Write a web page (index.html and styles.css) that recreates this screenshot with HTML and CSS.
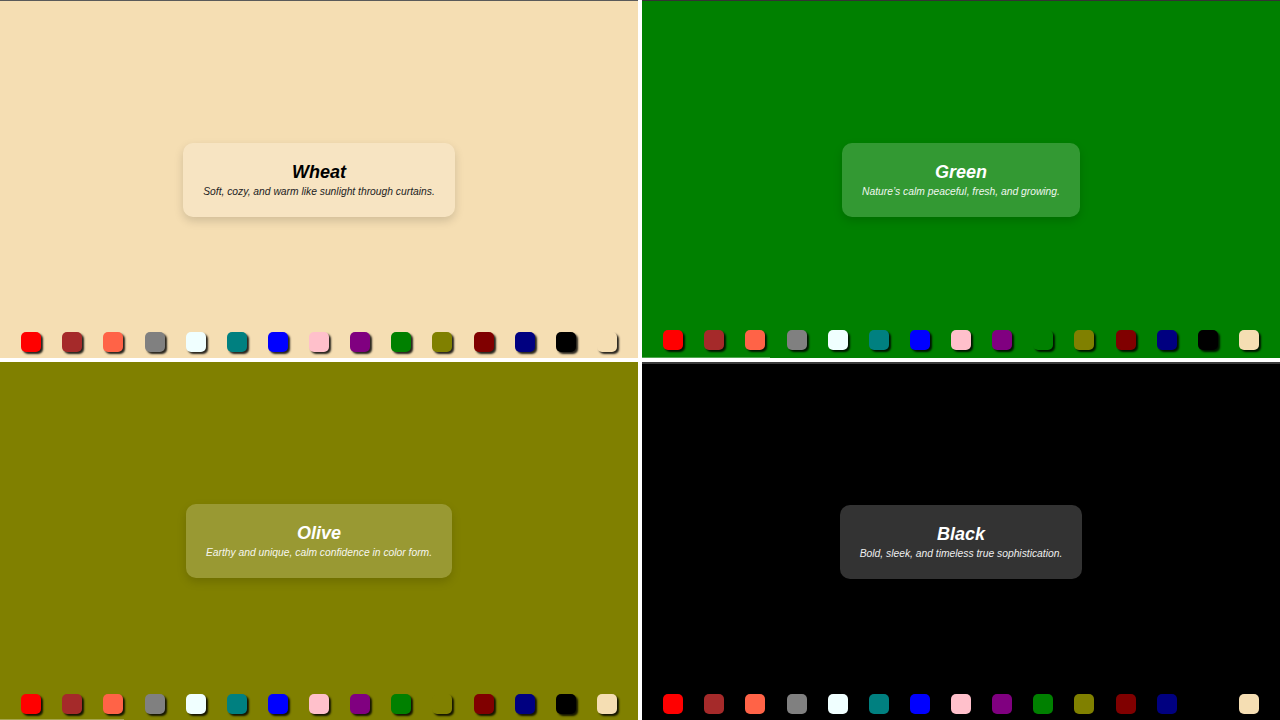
FILE: index.html
```html
<!DOCTYPE html>
<html lang="en">
<head>
<meta charset="utf-8">
<title>Colors</title>
<link rel="stylesheet" href="styles.css">
</head>
<body>
<div class="grid">
  <section class="panel wheat top-line">
    <div class="stage">
      <div class="card dark-text">
        <h2 class="title">Wheat</h2>
        <p class="desc">Soft, cozy, and warm like sunlight through curtains.</p>
      </div>
    </div>
    <div class="swatches">
      <span class="sw c-red"></span><span class="sw c-brown"></span><span class="sw c-tomato"></span><span class="sw c-gray"></span><span class="sw c-azure"></span><span class="sw c-teal"></span><span class="sw c-blue"></span><span class="sw c-pink"></span><span class="sw c-purple"></span><span class="sw c-green"></span><span class="sw c-olive"></span><span class="sw c-maroon"></span><span class="sw c-navy"></span><span class="sw c-black"></span><span class="sw c-wheat"></span>
    </div>
  </section>
  <section class="panel green top-line-dark">
    <div class="stage">
      <div class="card">
        <h2 class="title">Green</h2>
        <p class="desc">Nature’s calm peaceful, fresh, and growing.</p>
      </div>
    </div>
    <div class="swatches raised">
      <span class="sw c-red"></span><span class="sw c-brown"></span><span class="sw c-tomato"></span><span class="sw c-gray"></span><span class="sw c-azure"></span><span class="sw c-teal"></span><span class="sw c-blue"></span><span class="sw c-pink"></span><span class="sw c-purple"></span><span class="sw c-green"></span><span class="sw c-olive"></span><span class="sw c-maroon"></span><span class="sw c-navy"></span><span class="sw c-black"></span><span class="sw c-wheat"></span>
    </div>
    <div class="progress"><div class="bar" style="width:20%"></div></div>
  </section>
  <section class="panel olive">
    <div class="stage">
      <div class="card">
        <h2 class="title">Olive</h2>
        <p class="desc">Earthy and unique, calm confidence in color form.</p>
      </div>
    </div>
    <div class="swatches">
      <span class="sw c-red"></span><span class="sw c-brown"></span><span class="sw c-tomato"></span><span class="sw c-gray"></span><span class="sw c-azure"></span><span class="sw c-teal"></span><span class="sw c-blue"></span><span class="sw c-pink"></span><span class="sw c-purple"></span><span class="sw c-green"></span><span class="sw c-olive"></span><span class="sw c-maroon"></span><span class="sw c-navy"></span><span class="sw c-black"></span><span class="sw c-wheat"></span>
    </div>
    <div class="progress"><div class="bar" style="width:19.5%"></div></div>
  </section>
  <section class="panel black top-line-gray">
    <div class="stage">
      <div class="card">
        <h2 class="title">Black</h2>
        <p class="desc">Bold, sleek, and timeless true sophistication.</p>
      </div>
    </div>
    <div class="swatches">
      <span class="sw c-red"></span><span class="sw c-brown"></span><span class="sw c-tomato"></span><span class="sw c-gray"></span><span class="sw c-azure"></span><span class="sw c-teal"></span><span class="sw c-blue"></span><span class="sw c-pink"></span><span class="sw c-purple"></span><span class="sw c-green"></span><span class="sw c-olive"></span><span class="sw c-maroon"></span><span class="sw c-navy"></span><span class="sw c-black"></span><span class="sw c-wheat"></span>
    </div>
  </section>
</div>
</body>
</html>
```
FILE: styles.css
```css
* { box-sizing: border-box; }
html, body { margin: 0; padding: 0; }
body {
  background: #ffffff;
  font-family: "Liberation Sans", Arial, sans-serif;
  width: 1280px;
  height: 720px;
  overflow: hidden;
}
.grid {
  display: grid;
  grid-template-columns: 1fr 1fr;
  grid-template-rows: 1fr 1fr;
  gap: 4px;
  height: 720px;
}
.panel {
  position: relative;
  display: flex;
  flex-direction: column;
  overflow: hidden;
}
.wheat { background: #f5deb3; }
.green { background: #008000; }
.olive { background: #808000; }
.black { background: #000000; }
.top-line { border-top: 1px solid #5a5a5a; }
.top-line-dark { border-top: 1px solid #333333; }
.top-line-gray { border-top: 2px solid #3a3a3a; }

.stage {
  flex: 1;
  display: flex;
  align-items: center;
  justify-content: center;
  padding-top: 26px;
}
.card {
  background: rgba(255, 255, 255, 0.2);
  border-radius: 10px;
  padding: 18px 20px 19px;
  text-align: center;
  color: #ffffff;
  box-shadow: 0 4px 10px rgba(0, 0, 0, 0.15);
}
.title {
  margin: 0 0 3px;
  font-size: 18px;
  line-height: 22px;
  font-weight: bold;
  font-style: italic;
}
.desc {
  margin: 0;
  font-size: 10.3px;
  line-height: 12px;
  font-style: italic;
  opacity: 0.92;
}
.dark-text { color: #000000; }
.dark-text .desc { color: #222222; opacity: 1; }

.swatches {
  height: 26px;
  padding-bottom: 6px;
  display: flex;
  justify-content: space-evenly;
  align-items: flex-start;
}
.swatches.raised { padding-top: 0; margin-top: -2px; height: 28px; padding-bottom: 8px; }
.sw {
  width: 20px;
  height: 20px;
  border-radius: 5px;
  box-shadow: 2px 2px 2px rgba(0, 0, 0, 0.85);
}
.c-red { background: #ff0000; }
.c-brown { background: #a52a2a; }
.c-tomato { background: #ff6347; }
.c-gray { background: #808080; }
.c-azure { background: #f0ffff; }
.c-teal { background: #008080; }
.c-blue { background: #0000ff; }
.c-pink { background: #ffc0cb; }
.c-purple { background: #800080; }
.c-green { background: #008000; }
.c-olive { background: #808000; }
.c-maroon { background: #800000; }
.c-navy { background: #000080; }
.c-black { background: #000000; }
.c-wheat { background: #f5deb3; }

.progress {
  position: absolute;
  left: 0;
  right: 0;
  bottom: 0;
  height: 1px;
}
.bar {
  height: 100%;
  background: rgba(255, 255, 255, 0.3);
}
```
